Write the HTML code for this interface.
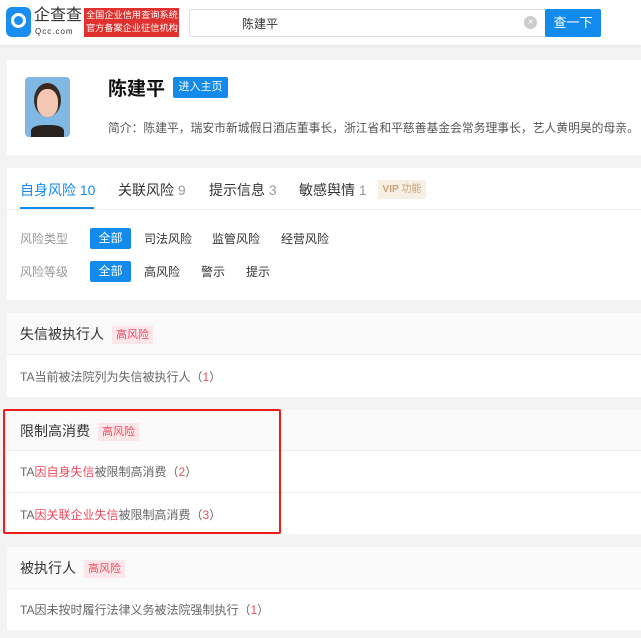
<!DOCTYPE html>
<html><head><meta charset="utf-8"><style>
*{margin:0;padding:0;box-sizing:border-box}
body{width:641px;height:638px;overflow:hidden;background:#f3f3f3;font-family:"Liberation Sans","Noto Sans CJK SC",sans-serif;color:#333;position:relative}
.a{position:absolute}
.card{position:absolute;left:7px;right:0;background:#fff}
.hd{background:#fafafa;border-bottom:1px solid #eee}
.tag{display:inline-block;background:#fde6e9;color:#f04a5e;font-size:11px;padding:2px 4px;line-height:14px;vertical-align:middle;margin-left:8px}
.it{font-size:12px;color:#666}
.r{color:#f04a5e}
.btn{background:#128bed;color:#fff;font-size:12px;border-radius:2px;text-align:center;line-height:21px}
</style></head><body>
<div class="a" style="left:0;top:0;width:641px;height:45px;background:#fff;box-shadow:0 1px 3px rgba(0,0,0,.08)"></div>
<div class="a" style="left:6px;top:7px;width:25px;height:30px;background:#1a8ef0;border-radius:6px"></div>
<div class="a" style="left:11px;top:13px;width:15px;height:15px;border:3px solid #fff;border-radius:50%"></div>
<div class="a" style="left:34px;top:6px;font-size:16px;line-height:20px;color:#333">企查查</div>
<div class="a" style="left:35px;top:27px;font-size:8px;line-height:10px;color:#333;letter-spacing:1px">Qcc.com</div>
<div class="a" style="left:84px;top:8px;width:95px;height:29px;background:#e0312f;color:#fff;font-size:9.2px;line-height:13px;padding:1px 2px;white-space:nowrap;overflow:hidden">全国企业信用查询系统<br>官方备案企业征信机构</div>
<div class="a" style="left:189px;top:9px;width:357px;height:28px;border:1px solid #ddd;border-radius:3px 0 0 3px;background:#fff"></div>
<div class="a" style="left:242px;top:15px;font-size:12px;color:#333">陈建平</div>
<div class="a" style="left:524px;top:16px;width:13px;height:13px;border-radius:50%;background:#ccc;color:#fff;font-size:10px;line-height:13px;text-align:center">×</div>
<div class="a btn" style="left:545px;top:9px;width:56px;height:28px;line-height:28px;font-size:13px">查一下</div>

<div class="card" style="top:60px;height:95px"></div>
<div class="a" style="left:25px;top:77px;width:45px;height:60px;border-radius:4px;background:#7fb9e3;overflow:hidden">
<div class="a" style="left:9px;top:6px;width:27px;height:34px;border-radius:50%;background:#3a2a22"></div>
<div class="a" style="left:12px;top:12px;width:21px;height:28px;border-radius:45%;background:#f2c8b4"></div>
<div class="a" style="left:6px;top:48px;width:33px;height:14px;border-radius:40% 40% 0 0;background:#2a2220"></div>
</div>
<div class="a" style="left:108px;top:74px;font-size:19px;font-weight:bold;color:#111">陈建平</div>
<div class="a btn" style="left:173px;top:77px;width:55px;height:21px;font-size:11px">进入主页</div>
<div class="a" style="left:108px;top:119px;font-size:11.8px;color:#555;white-space:nowrap">简介：陈建平，瑞安市新城假日酒店董事长，浙江省和平慈善基金会常务理事长，艺人黄明昊的母亲。</div>

<div class="card" style="top:168px;height:132px"></div>
<div class="a" style="left:7px;top:209px;width:634px;height:1px;background:#eee"></div>
<div class="a" style="left:20px;top:180px;font-size:14px;color:#128bed">自身风险 <span>10</span></div>
<div class="a" style="left:20px;top:207px;width:74px;height:2px;background:#128bed"></div>
<div class="a" style="left:118px;top:180px;font-size:14px">关联风险 <span style="color:#999">9</span></div>
<div class="a" style="left:209px;top:180px;font-size:14px">提示信息 <span style="color:#999">3</span></div>
<div class="a" style="left:299px;top:180px;font-size:14px">敏感舆情 <span style="color:#999">1</span></div>
<div class="a" style="left:378px;top:180px;width:48px;height:19px;background:#f7efe4;color:#c9a27a;font-size:10px;line-height:19px;text-align:center"><b>VIP</b> 功能</div>
<div class="a" style="left:20px;top:230px;font-size:12px;color:#999">风险类型</div>
<div class="a btn" style="left:90px;top:228px;width:41px;height:21px;line-height:21px">全部</div>
<div class="a" style="left:144px;top:230px;font-size:12px">司法风险</div>
<div class="a" style="left:212px;top:230px;font-size:12px">监管风险</div>
<div class="a" style="left:281px;top:230px;font-size:12px">经营风险</div>
<div class="a" style="left:20px;top:263px;font-size:12px;color:#999">风险等级</div>
<div class="a btn" style="left:90px;top:261px;width:41px;height:21px;line-height:21px">全部</div>
<div class="a" style="left:144px;top:263px;font-size:12px">高风险</div>
<div class="a" style="left:201px;top:263px;font-size:12px">警示</div>
<div class="a" style="left:246px;top:263px;font-size:12px">提示</div>

<div class="card" style="top:313px;height:84px"></div>
<div class="card hd" style="top:313px;height:42px"></div>
<div class="a" style="left:20px;top:324px;font-size:14px">失信被执行人<span class="tag">高风险</span></div>
<div class="a it" style="left:20px;top:368px">TA当前被法院列为失信被执行人（<span class="r">1</span>）</div>

<div class="card" style="top:410px;height:124px"></div>
<div class="card hd" style="top:410px;height:41px"></div>
<div class="a" style="left:7px;top:492px;width:634px;height:1px;background:#eee"></div>
<div class="a" style="left:20px;top:421px;font-size:14px">限制高消费<span class="tag">高风险</span></div>
<div class="a it" style="left:20px;top:463px">TA<span class="r">因自身失信</span>被限制高消费（<span class="r">2</span>）</div>
<div class="a it" style="left:20px;top:506px">TA<span class="r">因关联企业失信</span>被限制高消费（<span class="r">3</span>）</div>
<div class="a" style="left:3px;top:409px;width:278px;height:125px;border:2px solid #f01c1c;border-radius:2px"></div>

<div class="card" style="top:547px;height:83px"></div>
<div class="card hd" style="top:547px;height:42px"></div>
<div class="a" style="left:20px;top:558px;font-size:14px">被执行人<span class="tag">高风险</span></div>
<div class="a it" style="left:20px;top:601px">TA因未按时履行法律义务被法院强制执行（<span class="r">1</span>）</div>
</body></html>
